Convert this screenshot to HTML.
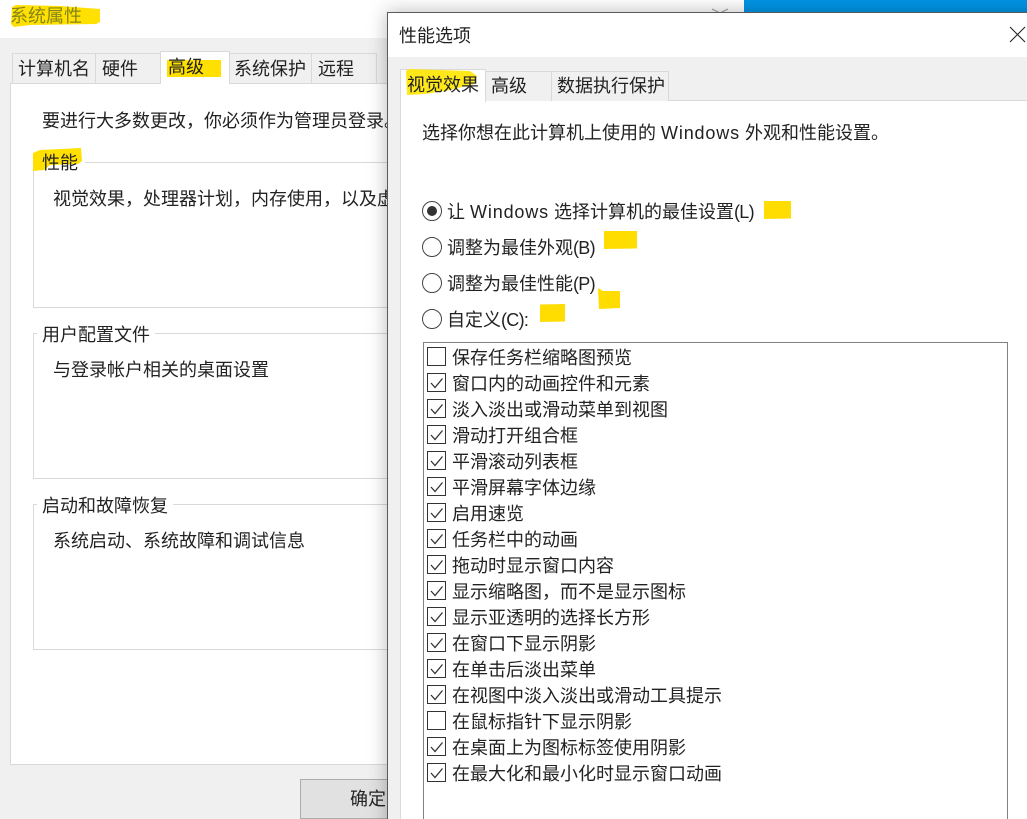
<!DOCTYPE html>
<html lang="zh"><head><meta charset="utf-8"><title>性能选项</title>
<style>
html,body{margin:0;padding:0;background:#fff}
#r{position:relative;width:1027px;height:819px;overflow:hidden;background:#fff;font-family:"Liberation Sans","Noto Sans CJK SC",sans-serif;font-size:18px;color:#222}
#r div{position:absolute;box-sizing:border-box}
.t{position:absolute;white-space:nowrap;line-height:26px;height:26px}
.tab{background:#f0f0f0;border:1px solid #d9d9d9;border-bottom:0}
.g{border:1px solid #d9d9d9;background:#fff}
.rd{width:20px;height:20px;border:1.3px solid #444;border-radius:50%;left:422px;background:#fff}
.w{letter-spacing:.85px}
.p{letter-spacing:-.7px}
svg{position:absolute;left:0;top:0}
</style></head><body>
<div id="r">
<!-- left dialog -->
<div style="left:0;top:0;width:744px;height:38px;background:#fff"></div>
<div style="left:744px;top:0;width:283px;height:13px;background:#0095e6"></div>
<div style="left:0;top:38px;width:744px;height:781px;background:#f0f0f0"></div>
<div class="tab" style="left:12px;top:53px;width:84px;height:31px"></div>
<div class="tab" style="left:95px;top:53px;width:66px;height:31px"></div>
<div class="tab" style="left:229px;top:53px;width:83px;height:31px"></div>
<div class="tab" style="left:311px;top:53px;width:66px;height:31px"></div>
<div style="left:10px;top:83px;width:500px;height:682px;background:#fff;border:1px solid #d9d9d9"></div>
<div style="left:160px;top:51px;width:70px;height:33px;background:#fff;border:1px solid #d9d9d9;border-bottom:0"></div>
<div class="g" style="left:33px;top:162px;width:460px;height:146px"></div>
<div class="g" style="left:33px;top:333px;width:460px;height:146px"></div>
<div class="g" style="left:33px;top:504px;width:460px;height:146px"></div>
<div style="left:37px;top:155px;width:48px;height:16px;background:#fff"></div>
<div style="left:37px;top:326px;width:118px;height:16px;background:#fff"></div>
<div style="left:37px;top:497px;width:136px;height:16px;background:#fff"></div>
<div style="left:300px;top:779px;width:120px;height:40px;background:#e1e1e1;border:1px solid #adadad"></div>

<svg width="1027" height="819" style="z-index:1">
<path d="M12 7 L16 5 L60 6 L100 9 L100 22 L96 24 L30 25 L14 27 L11 24Z" fill="#ffe000"/>
<path d="M167 60 L221 60 L221 77 L167 77Z" fill="#ffe000"/>
<path d="M33 153 L40 150 L81 148 L82 161 L78 164 L50 165 L44 170 L33 171Z" fill="#ffe000"/>
</svg>

<span class="t" style="left:10px;top:3px;color:#85851a;z-index:2">系统属性</span>
<span class="t" style="left:18px;top:56px;z-index:2">计算机名</span>
<span class="t" style="left:102px;top:56px;z-index:2">硬件</span>
<span class="t" style="left:168px;top:54px;z-index:2">高级</span>
<span class="t" style="left:234px;top:56px;z-index:2">系统保护</span>
<span class="t" style="left:318px;top:56px;z-index:2">远程</span>
<span class="t" style="left:42px;top:108px;z-index:2">要进行大多数更改，你必须作为管理员登录。</span>
<span class="t" style="left:42px;top:150px;z-index:2">性能</span>
<span class="t" style="left:53px;top:186px;z-index:2">视觉效果，处理器计划，内存使用，以及虚拟内存</span>
<span class="t" style="left:42px;top:322px;z-index:2">用户配置文件</span>
<span class="t" style="left:53px;top:357px;z-index:2">与登录帐户相关的桌面设置</span>
<span class="t" style="left:42px;top:493px;z-index:2">启动和故障恢复</span>
<span class="t" style="left:53px;top:528px;z-index:2">系统启动、系统故障和调试信息</span>
<span class="t" style="left:350px;top:786px;z-index:2">确定</span>
<svg width="1027" height="819" style="z-index:2"><path d="M712 9 L720 13 L728 9" fill="none" stroke="#999" stroke-width="1"/></svg>

<!-- right dialog -->
<div style="left:387px;top:12px;width:660px;height:830px;background:#f0f0f0;border:1px solid #5a5a5a;box-shadow:0 0 18px rgba(0,0,0,.28);z-index:3">
</div>
<div style="left:388px;top:13px;width:639px;height:44px;background:#fff;z-index:3"></div>
<div style="left:400px;top:100px;width:627px;height:719px;background:#fff;border-left:1px solid #d9d9d9;border-top:1px solid #d9d9d9;z-index:3"></div>
<div class="tab" style="left:485px;top:71px;width:67px;height:30px;z-index:3"></div>
<div class="tab" style="left:551px;top:71px;width:118px;height:30px;z-index:3"></div>
<div style="left:400px;top:69px;width:86px;height:33px;background:#fff;border:1px solid #d9d9d9;border-bottom:0;z-index:3"></div>
<div style="left:423px;top:342px;width:585px;height:490px;background:#fff;border:1px solid #828282;z-index:3"></div>

<svg width="1027" height="819" style="z-index:4">
<path d="M406 71 L409 69 L470 71 L477 76 L474 84 L450 90 L425 94 L407 95Z" fill="#ffe81a"/>
<path d="M764 201 L791 201 L791 218.500 L764 219Z" fill="#ffdd00"/>
<path d="M604 231 L637 231 L637 248.500 L604 249Z" fill="#ffdd00"/>
<path d="M598 288 L603 291 L620 291 L620 308 L599 309Z" fill="#ffdd00"/>
<path d="M540 304.500 L565 304 L565 321.500 L540 322Z" fill="#ffdd00"/>
<path d="M1010 27 L1025 42 M1025 27 L1010 42" stroke="#222" stroke-width="1.1" fill="none"/>
</svg>

<div style="left:0;top:0;width:1027px;height:819px;z-index:5">
<span class="t" style="left:399px;top:23px">性能选项</span>
<span class="t" style="left:407px;top:72px">视觉效果</span>
<span class="t" style="left:491px;top:73px">高级</span>
<span class="t" style="left:557px;top:73px">数据执行保护</span>
<span class="t" style="left:422px;top:120px">选择你想在此计算机上使用的 <span class="w">Windows</span> 外观和性能设置。</span>
<div class="rd" style="top:201px"></div><div style="left:427px;top:206px;width:10px;height:10px;border-radius:50%;background:#333"></div>
<div class="rd" style="top:237px"></div><div class="rd" style="top:273px"></div><div class="rd" style="top:309px"></div>
<span class="t" style="left:447px;top:199px">让 <span class="w">Windows</span> 选择计算机的最佳设置<span class="p">(L)</span></span>
<span class="t" style="left:447px;top:235px">调整为最佳外观<span class="p">(B)</span></span>
<span class="t" style="left:447px;top:271px">调整为最佳性能<span class="p">(P)</span></span>
<span class="t" style="left:447px;top:307px">自定义<span class="p">(C):</span></span>
<svg width="1027" height="819" fill="none" stroke="#333" stroke-width="1">
<rect x="427.5" y="347.5" width="18" height="18"/>
<rect x="427.5" y="373.5" width="18" height="18"/><path d="M431 383 L435 387.5 L442.500 378.500" stroke-width="1.300"/>
<rect x="427.5" y="399.5" width="18" height="18"/><path d="M431 409 L435 413.500 L442.500 404.500" stroke-width="1.300"/>
<rect x="427.5" y="425.5" width="18" height="18"/><path d="M431 435 L435 439.500 L442.500 430.500" stroke-width="1.300"/>
<rect x="427.5" y="451.5" width="18" height="18"/><path d="M431 461 L435 465.500 L442.500 456.500" stroke-width="1.300"/>
<rect x="427.5" y="477.5" width="18" height="18"/><path d="M431 487 L435 491.500 L442.500 482.500" stroke-width="1.300"/>
<rect x="427.5" y="503.5" width="18" height="18"/><path d="M431 513 L435 517.500 L442.500 508.500" stroke-width="1.300"/>
<rect x="427.5" y="529.5" width="18" height="18"/><path d="M431 539 L435 543.500 L442.500 534.500" stroke-width="1.300"/>
<rect x="427.5" y="555.5" width="18" height="18"/><path d="M431 565 L435 569.500 L442.500 560.500" stroke-width="1.300"/>
<rect x="427.5" y="581.5" width="18" height="18"/><path d="M431 591 L435 595.500 L442.500 586.500" stroke-width="1.300"/>
<rect x="427.5" y="607.5" width="18" height="18"/><path d="M431 617 L435 621.500 L442.500 612.500" stroke-width="1.300"/>
<rect x="427.5" y="633.5" width="18" height="18"/><path d="M431 643 L435 647.500 L442.500 638.500" stroke-width="1.300"/>
<rect x="427.5" y="659.5" width="18" height="18"/><path d="M431 669 L435 673.500 L442.500 664.500" stroke-width="1.300"/>
<rect x="427.5" y="685.5" width="18" height="18"/><path d="M431 695 L435 699.500 L442.500 690.500" stroke-width="1.300"/>
<rect x="427.5" y="711.5" width="18" height="18"/>
<rect x="427.5" y="737.5" width="18" height="18"/><path d="M431 747 L435 751.500 L442.500 742.500" stroke-width="1.300"/>
<rect x="427.5" y="763.5" width="18" height="18"/><path d="M431 773 L435 777.500 L442.500 768.500" stroke-width="1.300"/>
</svg>
<span class="t" style="left:452px;top:345px">保存任务栏缩略图预览</span>
<span class="t" style="left:452px;top:371px">窗口内的动画控件和元素</span>
<span class="t" style="left:452px;top:397px">淡入淡出或滑动菜单到视图</span>
<span class="t" style="left:452px;top:423px">滑动打开组合框</span>
<span class="t" style="left:452px;top:449px">平滑滚动列表框</span>
<span class="t" style="left:452px;top:475px">平滑屏幕字体边缘</span>
<span class="t" style="left:452px;top:501px">启用速览</span>
<span class="t" style="left:452px;top:527px">任务栏中的动画</span>
<span class="t" style="left:452px;top:553px">拖动时显示窗口内容</span>
<span class="t" style="left:452px;top:579px">显示缩略图，而不是显示图标</span>
<span class="t" style="left:452px;top:605px">显示亚透明的选择长方形</span>
<span class="t" style="left:452px;top:631px">在窗口下显示阴影</span>
<span class="t" style="left:452px;top:657px">在单击后淡出菜单</span>
<span class="t" style="left:452px;top:683px">在视图中淡入淡出或滑动工具提示</span>
<span class="t" style="left:452px;top:709px">在鼠标指针下显示阴影</span>
<span class="t" style="left:452px;top:735px">在桌面上为图标标签使用阴影</span>
<span class="t" style="left:452px;top:761px">在最大化和最小化时显示窗口动画</span>
</div>
</div>
</body></html>
